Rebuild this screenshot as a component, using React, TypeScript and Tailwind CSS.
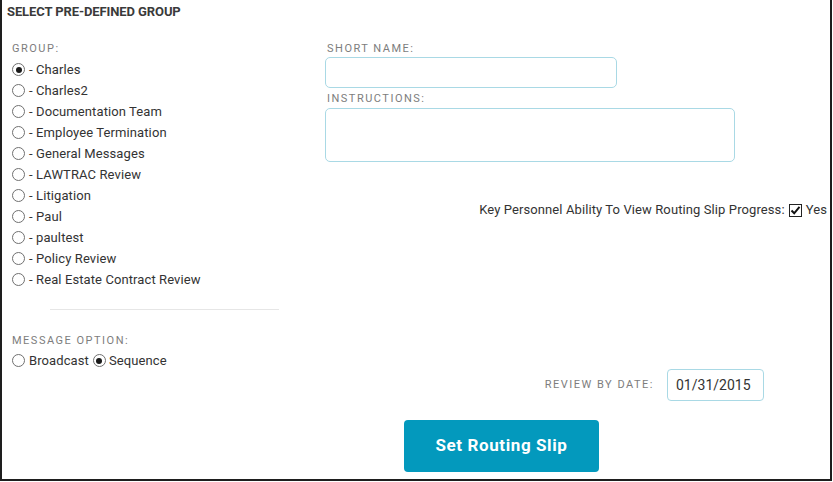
import React from "react";

function Radio({ checked }: { checked?: boolean }) {
  return (
    <span className="inline-flex w-[13px] h-[13px] shrink-0 items-center justify-center rounded-full border border-[#707070] bg-white">
      {checked ? <span className="block w-[6px] h-[6px] rounded-full bg-[#1a1a1a]" /> : null}
    </span>
  );
}

const groups = [
  "Charles",
  "Charles2",
  "Documentation Team",
  "Employee Termination",
  "General Messages",
  "LAWTRAC Review",
  "Litigation",
  "Paul",
  "paultest",
  "Policy Review",
  "Real Estate Contract Review",
];

function Label({ children, className = "" }: { children: React.ReactNode; className?: string }) {
  return (
    <div className={"text-[11px] leading-[14px] tracking-[1.5px] text-[#7d7d7d] uppercase " + className}>
      {children}
    </div>
  );
}

export default function App() {
  return (
    <div className="w-[833px] h-[482px] bg-white font-[family-name:Roboto,sans-serif] text-[#333]">
      <div className="w-[832px] h-[481px] border-l-2 border-r-2 border-b-2 border-[#1e1e1e] box-border">
        <div className="pl-[5px] pt-[4px] text-[13px] leading-[16px] font-bold tracking-[-0.1px] text-[#3a3a3a]">
          SELECT PRE-DEFINED GROUP
        </div>
        <div className="flex">
          <div className="w-[323px] shrink-0 pl-[10px]">
            <Label className="mt-[22px]">Group:</Label>
            <div className="mt-[3px]">
              {groups.map((g, i) => (
                <div key={g} className="flex items-center h-[21px] text-[13px] tracking-[0.1px]">
                  <Radio checked={i === 0} />
                  <span className="ml-[4px]">- {g}</span>
                </div>
              ))}
            </div>
            <div className="mt-[19px] ml-[38px] w-[229px] h-px bg-[#e6e6e6]" />
            <Label className="mt-[24px]">Message Option:</Label>
            <div className="mt-[2px] flex items-center h-[21px] text-[13px] tracking-[0.1px]">
              <Radio />
              <span className="ml-[4px]">Broadcast</span>
              <span className="ml-[4px] inline-flex">
                <Radio checked />
              </span>
              <span className="ml-[3px]">Sequence</span>
            </div>
          </div>
          <div className="flex-1">
            <Label className="mt-[22px] pl-[2px]">Short Name:</Label>
            <div className="mt-[1px] w-[292px] h-[31px] rounded-[5px] border border-[#a9d9e5]" />
            <Label className="mt-[4px] pl-[2px]">Instructions:</Label>
            <div className="mt-[2px] w-[410px] h-[54px] rounded-[5px] border border-[#a9d9e5]" />
            <div className="mt-[38px] h-[20px] flex items-center justify-end pr-[3px] text-[13px] tracking-[0.1px]">
              <span>Key Personnel Ability To View Routing Slip Progress:</span>
              <span className="ml-[4px] inline-flex w-[13px] h-[13px] border border-[#222] bg-white items-center justify-center">
                <svg width="11" height="11" viewBox="0 0 11 11">
                  <path d="M1.5 5.5 L4.2 8.3 L9.5 1.8" fill="none" stroke="#111" strokeWidth="2" />
                </svg>
              </span>
              <span className="ml-[4px]">Yes</span>
            </div>
            <div className="mt-[149px] flex items-center justify-end pr-[66px]">
              <Label>Review By Date:</Label>
              <div className="ml-[13px] w-[97px] h-[32px] rounded-[4px] border border-[#a9d9e5] flex items-center pl-[8px] text-[14px] tracking-normal text-[#333]">
                01/31/2015
              </div>
            </div>
            <button className="mt-[19px] ml-[79px] w-[195px] h-[52px] rounded-[4px] bg-[#0399bd] text-white text-[17px] font-bold tracking-[0.6px]">
              Set Routing Slip
            </button>
          </div>
        </div>
      </div>
    </div>
  );
}
